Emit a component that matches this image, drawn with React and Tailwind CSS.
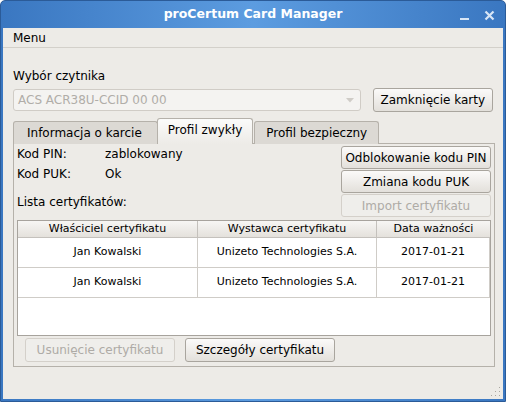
import React from "react";
import clsx from "clsx";

const Btn = ({ children, disabled, className }) => (
  <button
    type="button"
    className={clsx(
      "flex items-center justify-center rounded-[3px] border text-[12px] leading-none",
      disabled
        ? "border-[#d4d0ca] bg-[#efeeeb] text-[#aeaba6]"
        : "border-[#a9a59e] bg-gradient-to-b from-[#fbfaf9] to-[#e3e0db] text-black",
      className
    )}
  >
    {children}
  </button>
);

const certs = [
  { owner: "Jan Kowalski", issuer: "Unizeto Technologies S.A.", valid: "2017-01-21" },
  { owner: "Jan Kowalski", issuer: "Unizeto Technologies S.A.", valid: "2017-01-21" },
];

const App = () => {
  return (
    <div className="w-[506px] h-[402px] bg-white font-['DejaVu_Sans',sans-serif] text-[12px] text-black">
      {/* window frame */}
      <div className="h-full flex flex-col rounded-t-[5px] border border-[#2b5b98] bg-gradient-to-r from-[#3a77c1] via-[#5c9ce0] to-[#3a77c1] px-[2px] pb-[2px]">
        {/* title bar */}
        <div className="relative h-[27px] flex items-center justify-center shrink-0">
          <span className="text-[12.5px] font-bold text-white">proCertum Card Manager</span>
          <div className="absolute right-[8px] top-[9px] flex items-center gap-[14px]">
            <svg width="11" height="11" viewBox="0 0 11 11">
              <rect x="1" y="8" width="9" height="2" fill="#d8e6f6" />
            </svg>
            <svg width="11" height="11" viewBox="0 0 11 11">
              <path d="M1.5 1.5 L9.5 9.5 M9.5 1.5 L1.5 9.5" stroke="#d8e6f6" strokeWidth="2.2" />
            </svg>
          </div>
        </div>

        {/* client area */}
        <div className="flex-1 flex flex-col bg-[#edebe7]">
          {/* menu bar */}
          <div className="h-[20px] shrink-0 border-b border-[#d3d0ca] flex items-center pl-[10px]">
            <span className="leading-[14px]">Menu</span>
          </div>

          <div className="relative flex-1 flex flex-col px-[10px]">
            <div className="mt-[21px] leading-[14px]">Wybór czytnika</div>

            <div className="mt-[5px] flex items-center gap-[12px]">
              <div className="relative w-[349px] h-[22px] rounded-[3px] border border-[#d0ccc6] bg-[#f4f3f1] flex items-center pl-[4px] text-[#b0ada8]">
                ACS ACR38U-CCID 00 00
                <svg className="absolute right-[6px] top-[8px]" width="8" height="5" viewBox="0 0 8 5">
                  <path d="M0 0 L8 0 L4 4.5 Z" fill="#cfccc7" />
                </svg>
              </div>
              <Btn className="w-[121px] h-[24px]">Zamknięcie karty</Btn>
            </div>

            {/* tabs */}
            <div className="mt-[7px] flex items-end h-[25px] relative z-10 -mb-px">
              <div className="h-[23px] pl-[13px] pr-[15px] flex items-center border border-[#b5b1aa] border-b-0 rounded-t-[3px] bg-[#dcd9d4] mr-[-1px]">
                Informacja o karcie
              </div>
              <div className="h-[26px] px-[10px] pb-[3px] flex items-center border border-[#b5b1aa] border-b-0 rounded-t-[3px] bg-gradient-to-b from-[#fbfbfa] to-[#edebe7]">
                Profil zwykły
              </div>
              <div className="h-[23px] px-[11px] flex items-center border border-[#b5b1aa] border-b-0 rounded-t-[3px] bg-[#dcd9d4] ml-[1px]">
                Profil bezpieczny
              </div>
            </div>

            {/* tab panel */}
            <div className="w-[482px] h-[224px] border border-[#b5b1aa] bg-[#edebe7] px-[3px] flex flex-col">
              <div className="flex justify-between">
                <div className="pt-[3px] leading-[14px]">
                  <div className="flex">
                    <span className="w-[88px]">Kod PIN:</span>
                    <span>zablokowany</span>
                  </div>
                  <div className="flex mt-[6px]">
                    <span className="w-[88px]">Kod PUK:</span>
                    <span>Ok</span>
                  </div>
                  <div className="mt-[14px]">Lista certyfikatów:</div>
                </div>
                <div className="pt-[2px] flex flex-col gap-[1px]">
                  <Btn className="w-[150px] h-[23px]">Odblokowanie kodu PIN</Btn>
                  <Btn className="w-[150px] h-[23px]">Zmiana kodu PUK</Btn>
                  <Btn disabled className="w-[150px] h-[23px]">Import certyfikatu</Btn>
                </div>
              </div>

              {/* certificate table */}
              <div className="mt-[3px] h-[116px] border border-[#a7a39d] bg-white text-[11px]">
                <div className="grid grid-cols-[180px_179px_1fr] h-[17px] border-b border-[#c4c1bc] bg-gradient-to-b from-[#f7f6f4] to-[#e4e1dc]">
                  <div className="flex items-center justify-center border-r border-[#c4c1bc]">Właściciel certyfikatu</div>
                  <div className="flex items-center justify-center border-r border-[#c4c1bc]">Wystawca certyfikatu</div>
                  <div className="flex items-center justify-center">Data ważności</div>
                </div>
                {certs.map((c, i) => (
                  <div key={i} className="grid grid-cols-[180px_179px_1fr] h-[30px] border-b border-[#cfccc7]">
                    <div className="flex items-center justify-center border-r border-[#cfccc7]">{c.owner}</div>
                    <div className="flex items-center justify-center border-r border-[#cfccc7]">{c.issuer}</div>
                    <div className="flex items-center justify-center border-r border-[#cfccc7]">{c.valid}</div>
                  </div>
                ))}
              </div>

              <div className="mt-[2px] ml-[8px] flex gap-[10px]">
                <Btn disabled className="w-[150px] h-[24px]">Usunięcie certyfikatu</Btn>
                <Btn className="w-[150px] h-[24px]">Szczegóły certyfikatu</Btn>
              </div>
            </div>

            {/* resize grip */}
            <svg className="absolute right-[2px] bottom-[2px]" width="11" height="11" viewBox="0 0 11 11">
              {[[9, 1], [9, 5], [5, 5], [9, 9], [5, 9], [1, 9]].map(([x, y], i) => (
                <rect key={i} x={x} y={y} width="1" height="1" fill="#a9a6a0" />
              ))}
            </svg>
          </div>
        </div>
      </div>
    </div>
  );
};

export default App;
